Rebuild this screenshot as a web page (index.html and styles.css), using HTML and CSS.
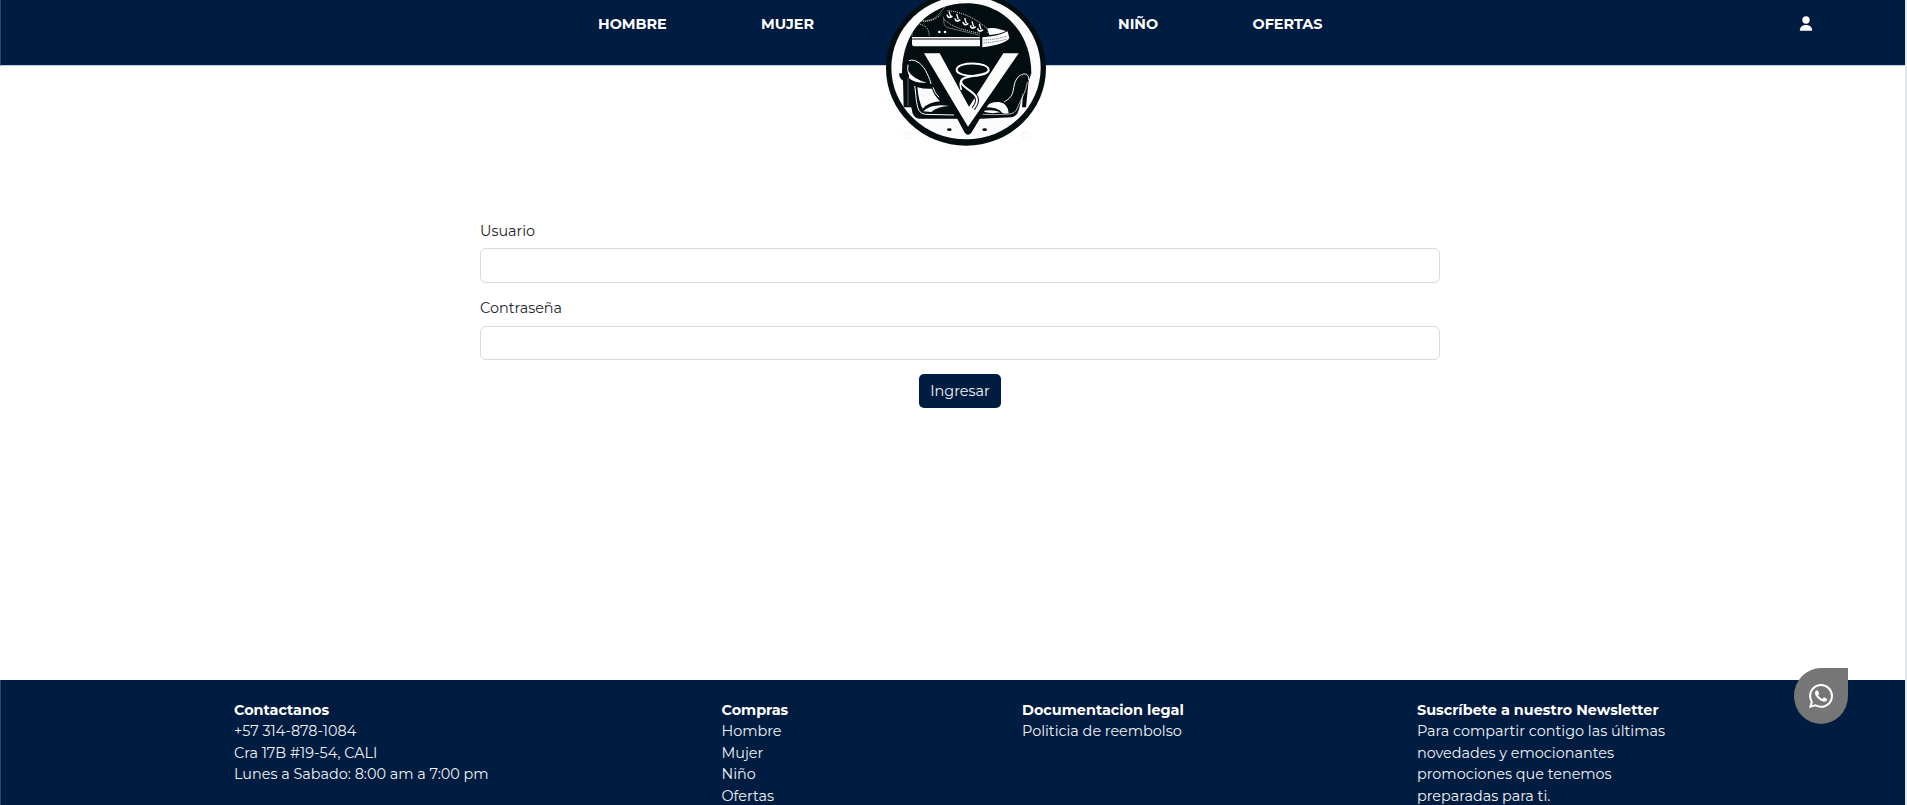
FILE: index.html
```html
<!DOCTYPE html>
<html lang="es">
<head>
<meta charset="utf-8">
<title>Ingresar</title>
<link rel="stylesheet" href="styles.css">
</head>
<body>
<div class="page">
  <header class="header">
    <nav class="nav">
      <a class="nav-link">HOMBRE</a>
      <a class="nav-link">MUJER</a>
      <a class="nav-link">NIÑO</a>
      <a class="nav-link">OFERTAS</a>
      <a class="user"><svg width="14" height="16" viewBox="0 0 14 16"><circle cx="7" cy="4" r="3.7" fill="#fff"/><path d="M.8 14.8C.8 11 3.3 8.9 7 8.9s6.200 2.100 6.200 5.900z" fill="#fff"/></svg></a>
    </nav>
    <svg class="logo" width="190" height="155" viewBox="0 0 570 465">
      <ellipse cx="288" cy="205" rx="240" ry="232" fill="#040d0f"/>
      <ellipse cx="288" cy="203" rx="224" ry="215" fill="#fcfcfd"/>
      <path d="M96 220C96 92 178 10 290 10s194 90 194 210l-8 22-8 80h-12l3-44-12 50q-5 22-24 24l-90 4h-66l-120 0q-20-4-22-30l-2-4h-22l-2-80q-13-10-11-22z" fill="#040d0f"/>
      <!-- Sneaker -->
      <g fill="none" stroke="#fff">
        <path d="M130 50c14 16 56 22 82-14l12-14M126 108V66M220 50c4 16-4 28 18 34l92 22" stroke-width="1.500" opacity=".8"/>
        <path d="M136 56c26 14 58 8 78-14M138 70c26 4 38 12 40 38M222 58c26 26 68 34 108 42M232 32c30 2 70 14 108 44 10 6 16 14 14 26" stroke-width="2.500" stroke-dasharray="3 3"/>
        <path d="M237 34l5 16M260 42l5 16M284 54l5 16M306 64l5 16M328 72l5 16" stroke-width="4"/>
        <path d="M231 44q3 14 16 4M255 55q3 14 16 4M279 66q3 14 16 4M301 76q3 14 16 4M323 85q3 14 16 4" stroke-width="5"/>
      </g>
      <circle cx="208" cy="96" r="4" fill="#fff"/><circle cx="225" cy="96" r="4" fill="#fff"/>
      <path d="M126 111h204v28H132q-6 0-6-7zM337 112q44-2 76-18l5 20q-8 18-81 28zM352 85q24-2 34 2l22 6q-20 10-50 12z" fill="#fcfcfd"/>
      <path d="M126 117h204" stroke="#040d0f" stroke-width="3"/>
      <path d="M341 120q42-2 70-12M341 129q40-3 70-12" fill="none" stroke="#040d0f" stroke-width="2" stroke-dasharray="3 3"/>
      <!-- Left heel -->
      <path d="M117 182c20-8 44 14 54 38 8 16 10 24 12 32" fill="none" stroke="#fff" stroke-width="3"/>
      <path d="M114 194q-4 14 4 32M134 258c4 22 4 54 12 72q6 12 20 13l86 2M189 262q6 20 18 30" fill="none" stroke="#fff" stroke-width="3"/>
      <path d="M114 232v86" stroke="#fff" stroke-width="1.500" opacity=".7"/>
      <path d="M117 216q14 22 54 32-40 2-54-14zM142 262q24 6 44 4 4 16 24 38-34 2-52 22-12-20-16-64zM160 334q22-24 78-16-36 2-54 18z" fill="#fcfcfd"/>
      <!-- Right heel -->
      <path d="M476 240c2-26-24-20-34-6-14 18-8 40-20 56-6 8-14 12-20 16" fill="none" stroke="#fff" stroke-width="3"/>
      <path d="M472 246c-4 32-22 56-30 78q-6 16-24 18-50 4-86 0" fill="none" stroke="#fff" stroke-width="2"/>
      <path d="M344 322q18-18 44-16 26 4 28 34-10 2-20-2-10-16-52-16zM336 334q26-8 56 3-32 6-56-3z" fill="#fcfcfd"/>
      <!-- V monogram -->
      <path d="M158 160h50l88 157 104-157h48L304 398q-10 12-20 0z" fill="#040d0f"/>
      <path d="M162 160h47l88 160 103-160h46L294 380z" fill="#fcfcfd"/>
      <!-- Ribbon -->
      <path d="M330 226c-42 6-72-6-70-18 3-24 96-24 96 2 0 18-54 14-76 26-16 10 2 24 14 32 28 18 36 32 16 58" fill="none" stroke="#040d0f" stroke-width="12"/>
      <path d="M330 226c-42 6-72-6-70-18 3-24 96-24 96 2 0 18-54 14-76 26-16 10 2 24 14 32 28 18 36 32 16 58" fill="none" stroke="#fff" stroke-width="6"/>
      <path d="M274 270q-8-24 4-34" fill="none" stroke="#fff" stroke-width="5"/>
      <ellipse cx="238" cy="389" rx="7" ry="4" fill="#040d0f"/><ellipse cx="344" cy="389" rx="7" ry="4" fill="#040d0f"/>
      <g fill="#fdfdfb" stroke="#eaf3f8" stroke-width="2"><circle cx="112" cy="406" r="12"/><circle cx="468" cy="406" r="12"/></g>
    </svg>
  </header>
  <main class="main">
    <form class="form">
      <label class="label" for="u">Usuario</label>
      <input class="input" id="u" type="text">
      <label class="label second" for="p">Contraseña</label>
      <input class="input short" id="p" type="password">
      <button class="submit" type="button">Ingresar</button>
    </form>
  </main>
  <footer class="footer">
    <section><h2>Contactanos</h2><p>+57 314-878-1084</p><p>Cra 17B #19-54, CALI</p><p>Lunes a Sabado: 8:00 am a 7:00 pm</p></section>
    <section><h2>Compras</h2><p>Hombre</p><p>Mujer</p><p>Niño</p><p>Ofertas</p></section>
    <section><h2>Documentacion legal</h2><p>Politicia de reembolso</p></section>
    <section><h2>Suscríbete a nuestro Newsletter</h2><p>Para compartir contigo las últimas</p><p>novedades y emocionantes</p><p>promociones que tenemos</p><p>preparadas para ti.</p></section>
  </footer>
  <a class="whatsapp"><svg width="24" height="24" viewBox="0 0 24 24" fill="#fff"><path d="M17.472 14.382c-.297-.149-1.758-.867-2.030-.967-.273-.099-.471-.148-.67.150-.197.297-.767.966-.940 1.164-.173.199-.347.223-.644.075-.297-.150-1.255-.463-2.390-1.475-.883-.788-1.480-1.761-1.653-2.059-.173-.297-.018-.458.130-.606.134-.133.298-.347.446-.520.149-.174.198-.298.298-.497.099-.198.050-.371-.025-.520-.075-.149-.669-1.612-.916-2.207-.242-.579-.487-.500-.669-.510-.173-.008-.371-.010-.570-.010-.198 0-.520.074-.792.372-.272.297-1.040 1.016-1.040 2.479 0 1.462 1.065 2.875 1.213 3.074.149.198 2.096 3.200 5.077 4.487.709.306 1.262.489 1.694.625.712.227 1.360.195 1.871.118.571-.085 1.758-.719 2.006-1.413.248-.694.248-1.289.173-1.413-.074-.124-.272-.198-.570-.347m-5.421 7.403h-.004a9.870 9.870 0 01-5.031-1.378l-.361-.214-3.741.982.998-3.648-.235-.374a9.860 9.860 0 01-1.510-5.260c.001-5.450 4.436-9.884 9.888-9.884 2.640 0 5.122 1.030 6.988 2.898a9.825 9.825 0 012.893 6.994c-.003 5.450-4.437 9.884-9.885 9.884m8.413-18.297A11.815 11.815 0 0012.050 0C5.495 0 .160 5.335.157 11.892c0 2.096.547 4.142 1.588 5.945L.057 24l6.305-1.654a11.882 11.882 0 005.683 1.448h.005c6.554 0 11.890-5.335 11.893-11.893a11.821 11.821 0 00-3.480-8.413Z"/></svg></a>
</div>
</body>
</html>
```
FILE: styles.css
```css
* { box-sizing: border-box; }
body { margin: 0; overflow: hidden; background: #fff; font-family: Montserrat, Inter, sans-serif; font-size: 14.4px; line-height: 21.6px; color: #212529; }
.page { position: relative; height: 805px; border-right: 2px solid #e4e7ea; overflow: hidden; display: flex; flex-direction: column; }
.header { position: relative; height: 66px; flex: none; background: #001c41; border-bottom: 1px solid #c5d0dc; border-left: 1px solid #2f4866; }
.nav { display: grid; grid-template-columns: 163px 357px 134.5px 546.5px auto; padding: 14px 0 0 597px; height: 38px; color: #fff; }
.nav-link { font-weight: 700; }
.user { padding-top: 2px; line-height: 0; }
.logo { position: absolute; left: 869px; top: 0; }
.main { flex: 1; }
.form { width: 960px; margin: 155px 0 0 480px; display: flex; flex-direction: column; }
.label { height: 27px; }
.second { margin-top: 15px; height: 28px; }
.input { height: 35px; width: 100%; border: 1px solid #d5dae1; border-radius: 6px; background: #fff; }
.short { height: 34px; }
.submit { align-self: center; margin-top: 14px; width: 82px; height: 34px; padding: 1px 0 0; border: 0; border-radius: 5px; background: #001c41; color: #f1f3f6; font: inherit; }
.footer { height: 125px; flex: none; overflow: hidden; display: grid; grid-template-columns: 487.5px 300.5px 395px 1fr; padding: 19.6px 0 0 233px; background: #001c41; border-left: 1px solid #2f4866; color: #eef1f5; }
.footer h2 { margin: 0; font-size: inherit; font-weight: 700; line-height: inherit; color: #fff; }
.footer p { margin: 0; white-space: nowrap; }
.whatsapp { position: absolute; left: 1794px; top: 668px; width: 54px; height: 56px; border-radius: 50% 0 50% 50%; background: #767676; display: flex; align-items: center; justify-content: center; }
```
